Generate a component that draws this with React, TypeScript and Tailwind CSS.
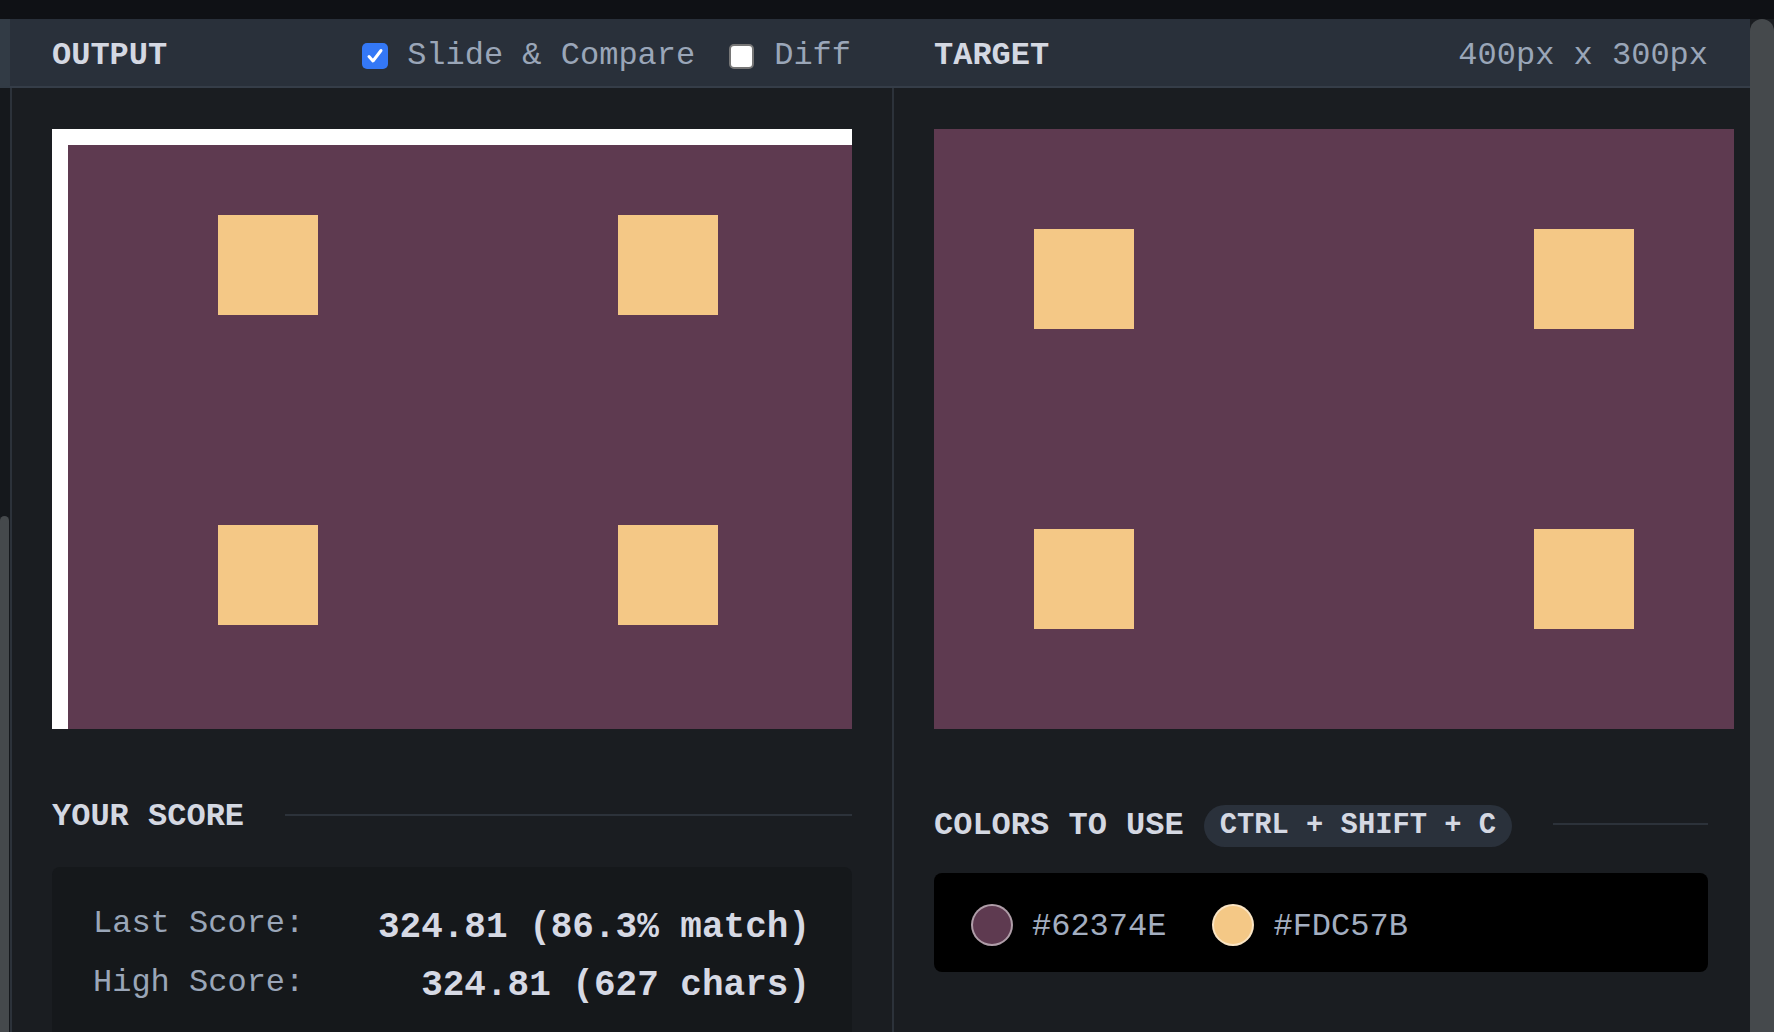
import React from 'react'

const mono = "font-['Liberation_Mono','DejaVu_Sans_Mono',monospace]"

function Canvas({ output }: { output?: boolean }) {
  // squares are placed on the 800x600 drawing itself
  const squares = output
    ? [
        [166, 86],
        [566, 86],
        [166, 396],
        [566, 396],
      ]
    : [
        [100, 100],
        [600, 100],
        [100, 400],
        [600, 400],
      ]
  return (
    <div className={`relative w-[800px] h-[600px] shrink-0 overflow-hidden ${output ? 'bg-white' : 'bg-[#5e3a50]'}`}>
      {output && <div className="absolute left-[16px] top-[16px] right-0 bottom-0 bg-[#5e3a50]" />}
      {squares.map(([x, y], i) => (
        <div
          key={i}
          className="absolute w-[100px] h-[100px] bg-[#f4c886]"
          style={{ left: x, top: y }}
        />
      ))}
    </div>
  )
}

function Checkbox({ checked }: { checked?: boolean }) {
  if (checked) {
    return (
      <div className="w-[26px] h-[26px] rounded-[5px] bg-[#3478f6] flex items-center justify-center">
        <svg width="18" height="18" viewBox="0 0 18 18">
          <polyline points="3,9.5 7,14 15,3.5" fill="none" stroke="white" strokeWidth="3" strokeLinecap="round" strokeLinejoin="round" />
        </svg>
      </div>
    )
  }
  return <div className="w-[25px] h-[25px] rounded-[5px] bg-white border-2 border-[#767676]" />
}

export default function App() {
  return (
    <div className={`w-[1774px] h-[1032px] overflow-hidden bg-[#0f1115] flex flex-col ${mono}`}>
      <div className="h-[19px] shrink-0" />
      <div className="flex flex-1 min-h-0">
        {/* left edge of the editor pane */}
        <div className="w-[10px] shrink-0 flex flex-col">
          <div className="h-[69px] bg-[#323b45]" />
          <div className="flex-1 bg-[#15181c] flex flex-col">
            <div className="mt-[428px] flex-1 w-[9px] rounded-t-full bg-[#45494c]" />
          </div>
        </div>

        {/* OUTPUT */}
        <div className="w-[882px] shrink-0 flex flex-col">
          <div className="h-[69px] shrink-0 bg-[#29303a] border-b-2 border-[#353d48] pl-[42px] pr-[41px] pt-[7px] flex items-center justify-between">
            <span className="text-[32px] font-bold text-[#d4d8e2]">OUTPUT</span>
            <div className="flex items-center text-[32px] text-[#9aa6b8]">
              <Checkbox checked />
              <span className="ml-[19px]">Slide &amp; Compare</span>
              <div className="ml-[34px]">
                <Checkbox />
              </div>
              <span className="ml-[20px]">Diff</span>
            </div>
          </div>
          <div className="flex-1 bg-[#1a1d21] border-l-2 border-[#2c323a] pl-[40px] pr-[40px] pt-[41px] flex flex-col">
            <Canvas output />
            <div className="mt-[64px] flex items-center gap-[41px] leading-[48px]">
              <span className="text-[32px] font-bold text-[#d4d8e2]">YOUR SCORE</span>
              <div className="flex-1 h-[2px] bg-[#2c323a] -mt-[4px]" />
            </div>
            <div className="mt-[26px] flex-1 bg-[#15181b] rounded-t-lg pl-[41px] pr-[42px] pt-[27px]">
              <div className="flex items-center justify-between h-[59px]">
                <span className="text-[32px] text-[#9aa6b8]">Last Score:</span>
                <span className="text-[36px] font-bold text-[#d6d9e4] mt-[8px]">324.81 (86.3% match)</span>
              </div>
              <div className="flex items-center justify-between h-[59px]">
                <span className="text-[32px] text-[#9aa6b8]">High Score:</span>
                <span className="text-[36px] font-bold text-[#d6d9e4] mt-[6px]">324.81 (627 chars)</span>
              </div>
            </div>
          </div>
        </div>

        {/* TARGET */}
        <div className="flex-1 min-w-0 flex flex-col">
          <div className="h-[69px] shrink-0 bg-[#29303a] border-b-2 border-[#353d48] px-[42px] pt-[7px] flex items-center justify-between">
            <span className="text-[32px] font-bold text-[#d4d8e2]">TARGET</span>
            <span className="text-[32px] text-[#9aa6b8]">400px x 300px</span>
          </div>
          <div className="flex-1 bg-[#1a1d21] border-l-2 border-[#2c323a] pl-[40px] pr-[42px] pt-[41px] flex flex-col overflow-hidden">
            <Canvas />
            <div className="mt-[73px] flex items-center leading-[48px]">
              <span className="text-[32px] font-bold text-[#d4d8e2]">COLORS TO USE</span>
              <span className="ml-[20px] h-[42px] px-[16px] rounded-full bg-[#2a313b] flex items-center text-[28.8px] font-bold text-[#d4d8e2]">
                CTRL + SHIFT + C
              </span>
              <div className="ml-[41px] flex-1 h-[2px] bg-[#2c323a] -mt-[4px]" />
            </div>
            <div className="mt-[23px] h-[99px] bg-black rounded-lg pl-[37px] pt-[4px] flex items-center text-[32px] text-[#a3aec0]">
              <div className="w-[42px] h-[42px] rounded-full bg-[#5e3a50] border-2 border-white/50" />
              <span className="ml-[19px] mt-[4px]">#62374E</span>
              <div className="ml-[46px] w-[42px] h-[42px] rounded-full bg-[#f4c886] border-2 border-white/50" />
              <span className="ml-[19px] mt-[4px]">#FDC57B</span>
            </div>
          </div>
        </div>

        {/* scrollbar */}
        <div className="w-[24px] shrink-0 bg-[#1a1d21] flex flex-col">
          <div className="flex-1 rounded-t-full bg-[#45494c]" />
        </div>
      </div>
    </div>
  )
}
